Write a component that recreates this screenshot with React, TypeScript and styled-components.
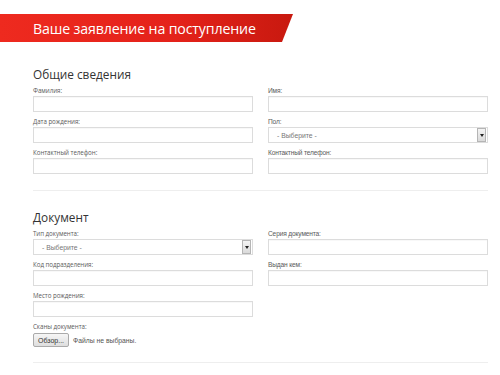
import React from "react";
import styled, { createGlobalStyle } from "styled-components";

const Global = createGlobalStyle`
  html, body { margin: 0; padding: 0; background: #fff; }
  body { font-family: "Open Sans", "Liberation Sans", sans-serif; color: #333; }
  * { box-sizing: border-box; }
`;

const Page = styled.div`
  width: 500px;
  height: 375px;
  overflow: hidden;
  padding-top: 14px;
`;

const Banner = styled.div`
  width: 293px;
  height: 28px;
  background: linear-gradient(90deg, #ee2a1f 0%, #e4221a 60%, #c8190f 100%);
  clip-path: polygon(0 0, 100% 0, calc(100% - 11px) 100%, 0 100%);
  display: flex;
  align-items: center;
  padding-left: 33px;
`;

const BannerTitle = styled.h1`
  margin: 0;
  font-family: "Open Sans", sans-serif;
  font-weight: 400;
  font-size: 14.2px;
  color: #fff;
  letter-spacing: -0.15px;
`;

const Content = styled.div`
  padding: 0 12px 0 33px;
`;

const Section = styled.section<{ $top: number; $bottom: number }>`
  padding-top: ${(p) => p.$top}px;
  padding-bottom: ${(p) => p.$bottom}px;
  border-bottom: 1px solid #eeeeee;
  width: 455px;
`;

const Heading = styled.h2`
  margin: 0 0 4px 0;
  font-family: "Open Sans", sans-serif;
  font-weight: 400;
  font-size: 11.8px;
  line-height: 16px;
  color: #333;
`;

const Grid = styled.div`
  display: grid;
  grid-template-columns: 220px 220px;
  column-gap: 15px;
  row-gap: 5px;
`;

const Field = styled.div`
  display: flex;
  flex-direction: column;
  gap: 1px;
`;

const Label = styled.label<{ $narrow?: boolean }>`
  font-family: ${(p) => (p.$narrow ? '"Liberation Sans", sans-serif' : '"Open Sans", sans-serif')};
  font-size: ${(p) => (p.$narrow ? "6.6px" : "6.2px")};
  letter-spacing: ${(p) => (p.$narrow ? "-0.15px" : "-0.05px")};
  line-height: 9px;
  color: #5a5a5a;
`;

const Input = styled.div`
  height: 16px;
  border: 1px solid #dcdcdc;
  background: #fff;
  box-shadow: inset 0 1px 1px rgba(0, 0, 0, 0.03);
`;

const Select = styled.div`
  height: 16px;
  border: 1px solid #dcdcdc;
  background: #fff;
  display: flex;
  align-items: center;
  justify-content: space-between;
  padding: 0 1px 0 8px;
  font-family: "Liberation Sans", sans-serif;
  font-size: 6.8px;
  color: #777;
`;

const Arrow = styled.div`
  width: 9px;
  height: 14px;
  border: 1px solid #b5b5b5;
  background: linear-gradient(180deg, #f4f4f4, #dadada);
  display: flex;
  align-items: center;
  justify-content: center;
  &::after {
    content: "";
    border-left: 2.5px solid transparent;
    border-right: 2.5px solid transparent;
    border-top: 3px solid #222;
  }
`;

const FileRow = styled.div`
  display: flex;
  align-items: center;
  gap: 4px;
  margin-top: 1px;
`;

const BrowseButton = styled.button`
  height: 14px;
  width: 36px;
  padding: 0;
  border: 1px solid #aaa;
  border-radius: 2px;
  background: linear-gradient(180deg, #f6f6f6, #dedede);
  font-family: "Liberation Sans", sans-serif;
  font-size: 7px;
  color: #333;
`;

const FileText = styled.span`
  font-family: "Liberation Sans", sans-serif;
  font-size: 6.8px;
  color: #555;
`;

export default function App() {
  return (
    <Page>
      <Global />
      <Banner>
        <BannerTitle>Ваше заявление на поступление</BannerTitle>
      </Banner>
      <Content>
        <Section $top={24} $bottom={16}>
          <Heading>Общие сведения</Heading>
          <Grid>
            <Field>
              <Label>Фамилия:</Label>
              <Input />
            </Field>
            <Field>
              <Label $narrow>Имя:</Label>
              <Input />
            </Field>
            <Field>
              <Label>Дата рождения:</Label>
              <Input />
            </Field>
            <Field>
              <Label $narrow>Пол:</Label>
              <Select>
                - Выберите -
                <Arrow />
              </Select>
            </Field>
            <Field>
              <Label>Контактный телефон:</Label>
              <Input />
            </Field>
            <Field>
              <Label $narrow>Контактный телефон:</Label>
              <Input />
            </Field>
          </Grid>
        </Section>
        <Section $top={18} $bottom={15}>
          <Heading>Документ</Heading>
          <Grid>
            <Field>
              <Label>Тип документа:</Label>
              <Select>
                - Выберите -
                <Arrow />
              </Select>
            </Field>
            <Field>
              <Label $narrow>Серия документа:</Label>
              <Input />
            </Field>
            <Field>
              <Label>Код подразделения:</Label>
              <Input />
            </Field>
            <Field>
              <Label $narrow>Выдан кем:</Label>
              <Input />
            </Field>
            <Field>
              <Label>Место рождения:</Label>
              <Input />
            </Field>
            <div />
            <Field>
              <Label>Сканы документа:</Label>
              <FileRow>
                <BrowseButton>Обзор...</BrowseButton>
                <FileText>Файлы не выбраны.</FileText>
              </FileRow>
            </Field>
          </Grid>
        </Section>
      </Content>
    </Page>
  );
}
